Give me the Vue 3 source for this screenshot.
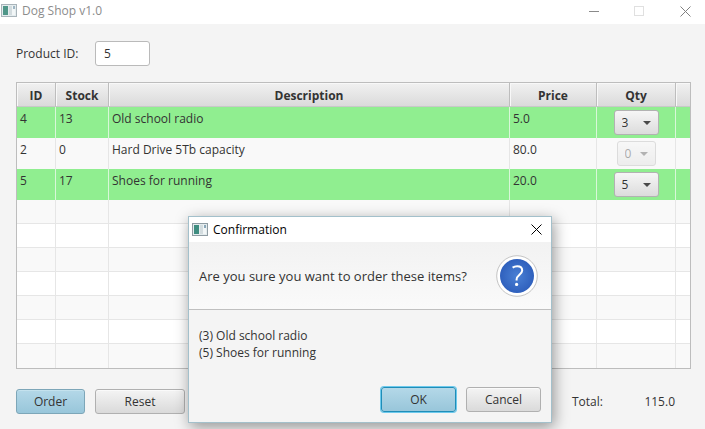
<script setup>
import { computed, ref } from 'vue'

const productId = ref('5')
const items = ref([
  { id: 4, stock: 13, name: 'Old school radio', price: 5, qty: 3 },
  { id: 2, stock: 0, name: 'Hard Drive 5Tb capacity', price: 80, qty: 0 },
  { id: 5, stock: 17, name: 'Shoes for running', price: 20, qty: 5 }
])
const dialogOpen = ref(true)
const emptyRows = 7

const ordered = computed(() => items.value.filter((i) => i.qty > 0))
const total = computed(() => ordered.value.reduce((sum, i) => sum + i.qty * i.price, 0))

function options(stock) {
  return Array.from({ length: stock + 1 }, (_, n) => n)
}
function reset() {
  items.value.forEach((i) => { i.qty = 0 })
}
</script>

<template>
  <div class="window">
    <header class="titlebar">
      <svg class="app-icon" width="16" height="14" viewBox="0 0 16 14" aria-hidden="true">
        <rect x="0.5" y="0.5" width="15" height="12" fill="#e4ecee" stroke="#a9b4ba" />
        <rect x="2" y="2" width="5" height="9" fill="#4f9688" />
        <rect x="8" y="2" width="3" height="9" fill="#d3dcdf" />
        <rect x="11" y="2" width="3" height="9" fill="#f2f6f7" />
        <rect x="12" y="2" width="2" height="3" fill="#9fb6c4" />
      </svg>
      <h1 class="title">Dog Shop v1.0</h1>
      <div class="controls">
        <button type="button" class="ctl" aria-label="Minimize">
          <svg width="11" height="11" viewBox="0 0 11 11"><path d="M1 5.5H11" stroke="#8a8a8a" /></svg>
        </button>
        <button type="button" class="ctl" aria-label="Maximize" disabled>
          <svg width="11" height="11" viewBox="0 0 11 11"><rect x="0.5" y="0.5" width="9" height="9" fill="none" stroke="#e0e0e0" /></svg>
        </button>
        <button type="button" class="ctl" aria-label="Close">
          <svg width="11" height="11" viewBox="0 0 11 11"><path d="M0.5 0.5L10.5 10.5M10.5 0.5L0.5 10.5" stroke="#808080" /></svg>
        </button>
      </div>
    </header>

    <main class="content">
      <div class="search">
        <label for="product-id">Product ID:</label>
        <input id="product-id" v-model="productId" type="text" class="field" />
      </div>

      <table class="grid">
        <colgroup>
          <col class="c-id" /><col class="c-stock" /><col /><col class="c-price" /><col class="c-qty" /><col class="c-rest" />
        </colgroup>
        <thead>
          <tr>
            <th>ID</th><th>Stock</th><th>Description</th><th>Price</th><th>Qty</th><th></th>
          </tr>
        </thead>
        <tbody>
          <tr v-for="item in items" :key="item.id" class="item" :class="{ picked: item.qty > 0 }">
            <td>{{ item.id }}</td>
            <td>{{ item.stock }}</td>
            <td>{{ item.name }}</td>
            <td>{{ item.price.toFixed(1) }}</td>
            <td class="qty">
              <span class="combo" :class="{ off: item.stock === 0 }">
                <select v-model="item.qty" :disabled="item.stock === 0" :aria-label="'Quantity of ' + item.name">
                  <option v-for="n in options(item.stock)" :key="n" :value="n">{{ n }}</option>
                </select>
                <svg width="8" height="4" viewBox="0 0 8 4" aria-hidden="true"><path d="M0 0H8L4 4Z" fill="#4a4a4a" /></svg>
              </span>
            </td>
            <td></td>
          </tr>
          <tr v-for="n in emptyRows" :key="'e' + n" class="empty">
            <td v-for="c in 6" :key="c"></td>
          </tr>
        </tbody>
      </table>

      <footer class="actions">
        <button type="button" class="btn primary order" @click="dialogOpen = true">Order</button>
        <button type="button" class="btn reset" @click="reset">Reset</button>
        <p class="total"><span>Total:</span><output>{{ total.toFixed(1) }}</output></p>
      </footer>
    </main>

    <section v-if="dialogOpen" class="dialog" role="dialog" aria-labelledby="dialog-title">
      <header class="dialog-bar">
        <svg class="app-icon" width="16" height="14" viewBox="0 0 16 14" aria-hidden="true">
          <rect x="0.5" y="0.5" width="15" height="12" fill="#e4ecee" stroke="#8f9ca3" />
          <rect x="2" y="2" width="5" height="9" fill="#3f8d80" />
          <rect x="8" y="2" width="3" height="9" fill="#d3dcdf" />
          <rect x="11" y="2" width="3" height="9" fill="#f2f6f7" />
          <rect x="12" y="2" width="2" height="3" fill="#8aa7b8" />
        </svg>
        <h2 id="dialog-title" class="title">Confirmation</h2>
        <button type="button" class="ctl" aria-label="Close dialog" @click="dialogOpen = false">
          <svg width="11" height="11" viewBox="0 0 11 11"><path d="M0.5 0.5L10.5 10.5M10.5 0.5L0.5 10.5" stroke="#000" /></svg>
        </button>
      </header>
      <div class="question">
        <p>Are you sure you want to order these items?</p>
        <svg width="42" height="42" viewBox="0 0 42 42" aria-hidden="true">
          <defs>
            <radialGradient id="badge-fill">
              <stop offset="0" stop-color="#4a80d4" />
              <stop offset="1" stop-color="#2f60bd" />
            </radialGradient>
          </defs>
          <circle cx="21" cy="21" r="20.3" fill="#fff" stroke="#c4c4c4" />
          <circle cx="21" cy="21" r="17" fill="url(#badge-fill)" />
          <path d="M16.6 12.6C18 11.6 19.6 11.2 21.2 11.2C24.4 11.2 26.2 12.9 26.2 15.5C26.2 19.4 20.6 20.2 20.6 24.4V25.6" fill="none" stroke="#fff" stroke-width="2" />
          <circle cx="20.6" cy="29.4" r="1.6" fill="#fff" />
        </svg>
      </div>
      <ul class="summary">
        <li v-for="item in ordered" :key="item.id">({{ item.qty }}) {{ item.name }}</li>
      </ul>
      <div class="dialog-actions">
        <button type="button" class="btn primary focused" @click="dialogOpen = false">OK</button>
        <button type="button" class="btn" @click="dialogOpen = false">Cancel</button>
      </div>
    </section>
  </div>
</template>

<style>
body {
  margin: 0;
  background: #f4f4f4;
}
</style>

<style scoped>
.window {
  position: relative;
  box-sizing: border-box;
  min-height: 100vh;
  background: #f4f4f4;
  color: #333;
  font: 12px/16px "Open Sans", "Noto Sans", sans-serif;
}
.window * {
  box-sizing: border-box;
}
button, input, select {
  font: inherit;
  color: inherit;
}
.titlebar, .dialog-bar {
  display: flex;
  align-items: center;
  background: #fff;
}
.titlebar {
  height: 24px;
  padding: 0 14px 2px 1px;
  color: #8c8c8c;
}
.title {
  margin: 0;
  padding-left: 5px;
  font-size: 12px;
  font-weight: 400;
}
.controls {
  display: flex;
  gap: 35px;
  margin-left: auto;
}
.ctl {
  display: flex;
  padding: 0;
  border: 0;
  background: none;
}
.content {
  padding: 17px 14px 0 16px;
}
.search {
  display: flex;
  align-items: center;
}
.search label {
  width: 79px;
}
.field {
  width: 55px;
  height: 25px;
  padding: 0 8px;
  border: 1px solid #bababa;
  border-radius: 3px;
  background: #fff;
  outline: 0;
}
.grid {
  width: 100%;
  margin-top: 16px;
  border: 1px solid #bdbdbd;
  border-spacing: 0;
  table-layout: fixed;
  background: #fff;
}
.c-id { width: 39px; }
.c-stock { width: 53px; }
.c-price { width: 87px; }
.c-qty { width: 79px; }
.c-rest { width: 14px; }
th {
  height: 24px;
  padding: 2px 0 0;
  border-right: 1px solid #bdbdbd;
  border-bottom: 1px solid #c8c8c8;
  background: linear-gradient(#f1f1f1, #dadada);
  box-shadow: inset 1px 1px #f8f8f8;
  font-weight: 700;
}
td {
  padding: 0 3px;
  border-right: 1px solid #e6e6e6;
  vertical-align: top;
}
th:last-child, td:last-child {
  border-right: 0;
}
.item td {
  height: 31px;
  padding-top: 4px;
  background: #f9f9f9;
}
.item.picked td {
  border-right-color: #d9f7d9;
  background: #90ee90;
}
.item .qty {
  padding: 3px 0 0;
  text-align: center;
}
.empty td {
  height: 24px;
  border-bottom: 1px solid #e6e6e6;
}
.empty:nth-child(even) td {
  background: #f9f9f9;
}
.empty:last-child td {
  border-bottom: 0;
}
.combo {
  display: inline-grid;
  grid-template-columns: 1fr auto;
  align-items: center;
  width: 45px;
  height: 25px;
  vertical-align: top;
}
.combo select {
  grid-area: 1 / 1 / 2 / 3;
  width: 100%;
  height: 25px;
  padding: 0 0 0 7px;
  border: 1px solid #b2b2b2;
  border-radius: 3px;
  background: linear-gradient(#f6f6f6, #dcdcdc);
  appearance: none;
}
.combo svg {
  grid-area: 1 / 2;
  margin-right: 8px;
  pointer-events: none;
}
.combo.off {
  width: 39px;
  opacity: 0.4;
}
.combo.off select {
  opacity: 1;
}
.actions {
  display: flex;
  align-items: center;
  gap: 10px;
  padding-top: 20px;
}
.btn {
  width: 75px;
  height: 25px;
  padding: 0;
  border: 1px solid #b0b0b0;
  border-radius: 3px;
  background: linear-gradient(#f4f4f4, #dadada);
  box-shadow: inset 0 1px #fafafa;
}
.btn.primary {
  border-color: #7da6b8;
  background: linear-gradient(#b4d8e8, #98c6da);
  box-shadow: inset 0 1px #c4e2ee;
}
.btn.focused {
  border-color: #1f8db8;
  box-shadow: 0 0 0 1px #6cc9ec;
}
.btn.order { width: 69px; }
.btn.reset { width: 90px; }
.total {
  display: flex;
  justify-content: space-between;
  width: 103px;
  margin: 0 16px 0 auto;
}
.dialog {
  position: absolute;
  top: 216px;
  left: 188px;
  width: 364px;
  border: 1px solid #a3c0cb;
  background: #f4f4f4;
  box-shadow: 2px 4px 14px rgba(0, 0, 0, 0.4);
}
.dialog-bar {
  height: 25px;
  padding: 0 9px 0 3px;
  color: #000;
}
.dialog-bar .ctl {
  margin-left: auto;
}
.question {
  display: flex;
  align-items: center;
  justify-content: space-between;
  height: 68px;
  padding: 0 13px 0 10px;
  border-bottom: 1px solid #c0c0c0;
  background: linear-gradient(#f2f2f2, #fafafa);
  font-size: 13px;
}
.question p {
  margin: 0;
}
.summary {
  margin: 0;
  padding: 17px 10px 26px;
  list-style: none;
  line-height: 17px;
}
.dialog-actions {
  display: flex;
  justify-content: flex-end;
  gap: 10px;
  padding: 0 10px 10px;
}
</style>
